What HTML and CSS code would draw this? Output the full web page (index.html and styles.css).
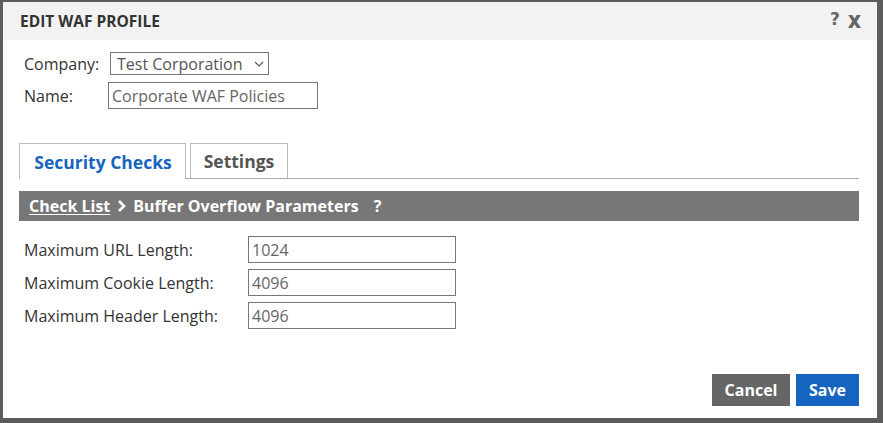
FILE: index.html
```html
<!DOCTYPE html>
<html>
<head>
<meta charset="utf-8">
<link rel="stylesheet" href="styles.css">
</head>
<body>
<div class="dialog">
  <div class="header">
    <span class="title">EDIT WAF PROFILE</span>
    <span class="tools"><span class="help">?</span><span class="close">X</span></span>
  </div>
  <div class="body">
    <div class="top-form">
      <div class="row">
        <label class="lbl">Company:</label>
        <div class="select">Test Corporation <svg class="chev" width="10" height="6" viewBox="0 0 10 6"><path d="M1 1 L5 5 L9 1" fill="none" stroke="#555" stroke-width="1.2"/></svg></div>
      </div>
      <div class="row">
        <label class="lbl">Name:</label>
        <div class="input name">Corporate WAF Policies</div>
      </div>
    </div>
    <div class="tabs">
      <div class="tab active">Security Checks</div>
      <div class="tab settings">Settings</div>
    </div>
    <div class="crumb">
      <a class="link">Check List</a>
      <svg class="arrow" width="9" height="14" viewBox="0 0 9 14"><path d="M2 2 L7 7 L2 12" fill="none" stroke="#fff" stroke-width="2.6"/></svg>
      <span>Buffer Overflow Parameters</span>
      <span class="q">?</span>
    </div>
    <div class="fields">
      <div class="frow"><span class="flbl">Maximum URL Length:</span><div class="input f">1024</div></div>
      <div class="frow"><span class="flbl">Maximum Cookie Length:</span><div class="input f">4096</div></div>
      <div class="frow"><span class="flbl">Maximum Header Length:</span><div class="input f">4096</div></div>
    </div>
    <div class="spacer"></div>
    <div class="buttons">
      <button class="btn cancel">Cancel</button>
      <button class="btn save">Save</button>
    </div>
  </div>
</div>
</body>
</html>
```
FILE: styles.css
```css
html, body { margin: 0; padding: 0; }
body {
  background: #5c5c5c;
  width: 883px;
  height: 423px;
  box-sizing: border-box;
  padding: 2px 6px 5px 3px;
  font-family: "Open Sans", sans-serif;
  color: #333;
  overflow: hidden;
}
.dialog {
  background: #fff;
  height: 416px;
  display: flex;
  flex-direction: column;
}
.header {
  height: 38px;
  background: #f2f2f2;
  display: flex;
  align-items: center;
  justify-content: space-between;
  padding: 0 16px 0 17px;
}
.title { font-weight: 700; font-size: 15.5px; color: #333; }
.tools { display: flex; gap: 8px; font-weight: 800; font-size: 17px; color: #666; font-family: "DejaVu Sans", sans-serif; }
.close { font-family: "Open Sans", sans-serif; font-weight: 800; font-size: 18px; }
.body {
  flex: 1;
  display: flex;
  flex-direction: column;
  padding: 12px 18px 12px 16px;
}
.top-form { display: flex; flex-direction: column; gap: 7px; }
.row { display: flex; align-items: center; }
.lbl { font-size: 16px; color: #333; width: 86px; padding-left: 5px; box-sizing: border-box; }
.select {
  margin-left: 5px;
  border: 1px solid #777;
  height: 23px;
  width: 159px;
  box-sizing: border-box;
  font-size: 16px;
  color: #555;
  display: flex;
  align-items: center;
  padding-left: 6px;
}
.chev { margin-left: 11px; }
.input {
  border: 1px solid #777;
  box-sizing: border-box;
  font-size: 16px;
  color: #666;
  display: flex;
  align-items: center;
  padding-left: 3px;
  background: #fff;
}
.name { width: 210px; height: 27px; margin-left: 3px; }
.tabs {
  margin-top: 34px;
  display: flex;
  gap: 4px;
  border-bottom: 1px solid #aaa;
  height: 35px;
}
.tab {
  border: 1px solid #bbb;
  border-bottom: none;
  font-weight: 700;
  font-size: 17.5px;
  color: #555;
  display: flex;
  align-items: center;
  justify-content: center;
  height: 35px;
  box-sizing: border-box;
  background: #fff;
}
.tab.active { color: #1565c0; width: 167px; height: 36px; padding-left: 1px; }
.tab.settings { width: 98px; }
.crumb {
  margin-top: 12px;
  height: 30px;
  background: #777;
  color: #fff;
  font-weight: 700;
  font-size: 16px;
  display: flex;
  align-items: center;
  padding-left: 10px;
}
.link { text-decoration: underline; text-underline-offset: 2px; }
.arrow { margin: 0 7px 0 7px; }
.q { margin-left: 15px; }
.fields {
  margin-top: 15px;
  display: flex;
  flex-direction: column;
  gap: 6px;
}
.frow { display: flex; align-items: center; }
.flbl { width: 229px; padding-left: 5px; box-sizing: border-box; font-size: 16px; color: #333; }
.f { width: 208px; height: 27px; }
.spacer { flex: 1; }
.buttons { display: flex; justify-content: flex-end; gap: 6px; }
.btn {
  border: none;
  color: #fff;
  font-family: "Open Sans", sans-serif;
  font-weight: 700;
  font-size: 16px;
  height: 32px;
  padding: 0;
}
.cancel { background: #666; width: 78px; }
.save { background: #1565c0; width: 63px; }
```
